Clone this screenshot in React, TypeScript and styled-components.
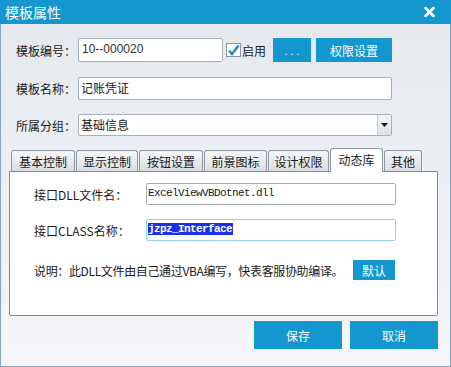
import React from "react";
import styled, { createGlobalStyle } from "styled-components";

const Global = createGlobalStyle`
  html, body { margin: 0; padding: 0; background: #ffffff; }
  body { font-family: "Noto Sans CJK SC", "Noto Sans", sans-serif; font-size: 12px; color: #1a1a1a; }
  * { box-sizing: border-box; }
`;

const CJK = `"Noto Sans CJK SC", "Noto Sans", sans-serif`;
const BLUE = "#1497ce";

const Window = styled.div`
  width: 451px;
  height: 367px;
  display: flex;
  flex-direction: column;
  background: linear-gradient(#e4e8ed, #f5f6f9);
`;

const TitleBar = styled.div`
  height: 24px;
  flex: none;
  background: ${BLUE};
  display: flex;
  align-items: center;
  justify-content: space-between;
  padding: 0 16px 0 5px;
`;

const Title = styled.div`
  color: #fff;
  font-family: ${CJK};
  font-size: 14px;
  line-height: 24px;
`;

const Body = styled.div`
  flex: 1;
  border: 1px solid #8aa4bf;
  border-top: none;
  padding: 14px 12px 0 8px;
  display: flex;
  flex-direction: column;
`;

const Form = styled.div`
  display: flex;
  flex-direction: column;
  padding-left: 7px;
`;

const Row = styled.div<{ $h: number; $mb: number }>`
  display: flex;
  align-items: center;
  height: ${(p) => p.$h}px;
  margin-bottom: ${(p) => p.$mb}px;
`;

const Label = styled.div<{ $w: number; $tight?: boolean }>`
  width: ${(p) => p.$w}px;
  flex: none;
  font-family: ${CJK};
  font-size: 12px;
  letter-spacing: ${(p) => (p.$tight ? "-0.35px" : "0")};
  color: #1a1a1a;
  white-space: nowrap;
`;

const Field = styled.div<{ $w: number; $focus?: boolean; $mono?: boolean }>`
  width: ${(p) => p.$w}px;
  height: 100%;
  flex: none;
  background: #fff;
  border: 1px solid ${(p) => (p.$focus ? "#93d1e6" : "#a7b0ba")};
  border-radius: 2px;
  display: flex;
  align-items: center;
  padding-left: ${(p) => (p.$mono ? 1 : 2)}px;
  padding-bottom: 2px;
  font-family: ${(p) => (p.$mono ? `"Liberation Mono", monospace` : CJK)};
  font-size: ${(p) => (p.$mono ? "11px" : "12px")};
  letter-spacing: ${(p) => (p.$mono ? "-0.6px" : "0")};
  color: #1a1a1a;
  white-space: nowrap;
  overflow: hidden;
`;

const NumText = styled.span`
  font-family: "Liberation Sans", Arial, sans-serif;
  font-size: 12px;
  color: #3a3128;
  margin-left: 1px;
`;

const Selected = styled.span`
  background: #1c30f0;
  color: #fff;
  font-weight: bold;
  padding-right: 1px;
`;

const Check = styled.div`
  display: flex;
  align-items: center;
  margin-left: 3px;
  font-family: ${CJK};
  font-size: 12px;
  gap: 1px;
`;

const Btn = styled.div<{ $w: number; $h: number; $ml?: number; $dots?: boolean }>`
  width: ${(p) => p.$w}px;
  height: ${(p) => p.$h}px;
  margin-left: ${(p) => p.$ml ?? 0}px;
  flex: none;
  background: ${BLUE};
  color: ${(p) => (p.$dots ? "#d8eef8" : "#fff")};
  font-family: ${CJK};
  font-size: ${(p) => (p.$dots ? "10px" : "12px")};
  letter-spacing: ${(p) => (p.$dots ? "3px" : "0")};
  padding-left: ${(p) => (p.$dots ? 3 : 0)}px;
  display: flex;
  align-items: center;
  justify-content: center;
`;

const Select = styled.div`
  width: 314px;
  height: 100%;
  background: #fff;
  border: 1px solid #a7b0ba;
  border-radius: 2px;
  display: flex;
  align-items: stretch;
`;

const SelectText = styled.div`
  flex: 1;
  padding: 0 2px 2px;
  display: flex;
  align-items: center;
  font-family: ${CJK};
  font-size: 12px;
`;

const SelectArrow = styled.div`
  width: 14px;
  border-left: 1px solid #c2c9d1;
  background: linear-gradient(#f3f5f7, #dde2e8);
  display: flex;
  align-items: center;
  justify-content: center;
`;

const TabStrip = styled.div`
  display: flex;
  align-items: flex-end;
  gap: 1px;
  height: 24px;
  padding-left: 2px;
  margin-top: 12px;
  margin-bottom: -1px;
  position: relative;
  z-index: 1;
`;

const Tab = styled.div<{ $w: number; $active?: boolean }>`
  width: ${(p) => p.$w}px;
  height: ${(p) => (p.$active ? 24 : 21)}px;
  margin-bottom: ${(p) => (p.$active ? 0 : 1)}px;
  border: 1px solid #8d98a4;
  border-bottom: none;
  border-radius: 3px 3px 0 0;
  background: ${(p) => (p.$active ? "#ffffff" : "linear-gradient(#f7f7f7, #d9dde2)")};
  display: flex;
  align-items: ${(p) => (p.$active ? "flex-start" : "center")};
  padding-top: ${(p) => (p.$active ? 2 : 0)}px;
  justify-content: center;
  font-family: ${CJK};
  font-size: 12px;
  color: #1a1a1a;
`;

const Panel = styled.div`
  width: 429px;
  height: 145px;
  background: #fff;
  border: 1px solid #7b8997;
  border-radius: 0 0 2px 2px;
  position: relative;
  padding: 11px 0 0 24px;
  display: flex;
  flex-direction: column;
`;

const Footer = styled.div`
  display: flex;
  justify-content: flex-end;
  gap: 8px;
  margin-top: 5px;
`;

const CloseIcon = () => (
  <svg width="11" height="10" viewBox="0 0 11 10">
    <path d="M1.5 1 L9.5 9 M9.5 1 L1.5 9" stroke="#fff" strokeWidth="2.6" strokeLinecap="square" />
  </svg>
);

const CheckBox = () => (
  <svg width="15" height="14" viewBox="0 0 15 14">
    <rect x="0.5" y="0.5" width="14" height="13" fill="#fff" stroke="#8a96a3" />
    <path d="M3 7.5 L6 11 L12.5 2.5" fill="none" stroke="#1e8ad2" strokeWidth="2.4" />
  </svg>
);

const Arrow = () => (
  <svg width="7" height="4" viewBox="0 0 7 4">
    <path d="M0 0 H7 L3.5 4 Z" fill="#111" />
  </svg>
);

const tabs = [
  { t: "基本控制", w: 64 },
  { t: "显示控制", w: 62 },
  { t: "按钮设置", w: 64 },
  { t: "前景图标", w: 63 },
  { t: "设计权限", w: 61 },
  { t: "动态库", w: 53, active: true },
  { t: "其他", w: 38 },
];

export default function App() {
  return (
    <>
      <Global />
      <Window>
        <TitleBar>
          <Title>模板属性</Title>
          <CloseIcon />
        </TitleBar>
        <Body>
          <Form>
            <Row $h={24} $mb={15}>
              <Label $w={62}>模板编号：</Label>
              <Field $w={145}>
                <NumText>10--000020</NumText>
              </Field>
              <Check>
                <CheckBox />
                <span>启用</span>
              </Check>
              <Btn $w={38} $h={24} $ml={7} $dots>...</Btn>
              <Btn $w={76} $h={24} $ml={5}>权限设置</Btn>
            </Row>
            <Row $h={23} $mb={14}>
              <Label $w={62}>模板名称：</Label>
              <Field $w={314}>记账凭证</Field>
            </Row>
            <Row $h={22} $mb={0}>
              <Label $w={62}>所属分组：</Label>
              <Select>
                <SelectText>基础信息</SelectText>
                <SelectArrow>
                  <Arrow />
                </SelectArrow>
              </Select>
            </Row>
          </Form>
          <TabStrip>
            {tabs.map((tb) => (
              <Tab key={tb.t} $w={tb.w} $active={tb.active}>
                {tb.t}
              </Tab>
            ))}
          </TabStrip>
          <Panel>
            <Row $h={22} $mb={14}>
              <Label $w={112}>接口DLL文件名：</Label>
              <Field $w={250} $mono>
                ExcelViewVBDotnet.dll
              </Field>
            </Row>
            <Row $h={22} $mb={19}>
              <Label $w={112}>接口CLASS名称：</Label>
              <Field $w={250} $mono $focus>
                <Selected>jzpz_Interface</Selected>
              </Field>
            </Row>
            <Row $h={20} $mb={0}>
              <Label $w={319} $tight>说明：此DLL文件由自己通过VBA编写，快表客服协助编译。</Label>
              <Btn $w={42} $h={20}>默认</Btn>
            </Row>
          </Panel>
          <Footer>
            <Btn $w={88} $h={28}>保存</Btn>
            <Btn $w={88} $h={28}>取消</Btn>
          </Footer>
        </Body>
      </Window>
    </>
  );
}
